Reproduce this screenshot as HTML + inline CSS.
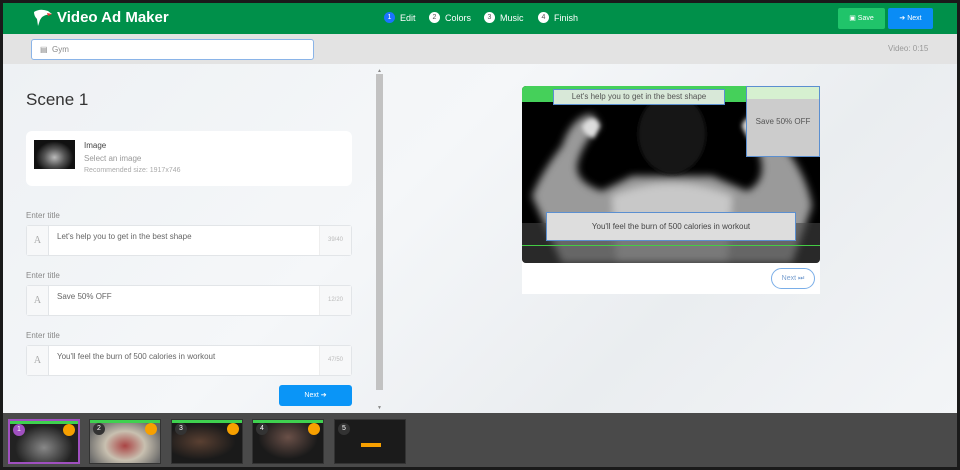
<!DOCTYPE html>
<html><head><meta charset="utf-8"><style>
*{box-sizing:border-box;margin:0;padding:0}
body{width:960px;height:470px;background:#1a1a1a;font-family:"Liberation Sans",sans-serif;position:relative;overflow:hidden}
.abs{position:absolute}
.hdr{left:3px;top:3px;width:954px;height:31px;background:#00904a}
.bar{left:3px;top:34px;width:954px;height:30px;background:#e3e3e3}
.main{left:3px;top:64px;width:954px;height:349px;background:linear-gradient(135deg,#eef1f4,#f5f7f9 40%,#eaedf0 70%,#f3f5f7)}
.bottom{left:3px;top:413px;width:954px;height:54px;background:#4a4a4a}
.step{color:#fff;font-size:9px;top:12px;display:flex;align-items:center}
.step i{display:inline-block;width:11px;height:11px;border-radius:50%;background:#fff;color:#555;font-style:normal;font-size:7px;text-align:center;line-height:11px;margin-right:5px}
.card{background:#fff;border-radius:6px}
.lbl{font-size:8px;color:#888}
.ta{left:26px;width:326px;height:31px;background:#fff;border:1px solid #e2e5e8;border-radius:3px}
.ta .a{position:absolute;left:0;top:0;width:22px;height:29px;border-right:1px solid #e2e5e8;background:#f7f8f9;font-family:"Liberation Serif",serif;font-size:10px;color:#aaa;text-align:center;line-height:29px}
.ta .t{position:absolute;left:30px;top:6px;font-size:8px;color:#666}
.ta .c{position:absolute;right:0;top:0;width:32px;height:29px;border-left:1px solid #eee;background:#f7f8f9;font-size:6px;color:#bbb;text-align:center;line-height:29px}
.th{top:419px;width:72px;height:45px;background:#111;border:1px solid #333}
.th .n{position:absolute;left:3px;top:3px;width:12px;height:12px;border-radius:50%;background:#333;color:#fff;font-size:7px;text-align:center;line-height:12px}
.th .o{position:absolute;right:3px;top:3px;width:12px;height:12px;border-radius:50%;background:#f7a000}
.th .g{position:absolute;left:0;top:0;width:100%;height:3px;background:#3fd14f}
</style></head><body>
<div class="abs hdr"></div>
<svg class="abs" style="left:32px;top:8px" width="22" height="20" viewBox="0 0 22 20"><path d="M2 4 Q8 0 16 3 L20 6 L14 7 Q10 8 8 12 L6 18 L5 11 Q2 8 2 4Z" fill="#fff"/><path d="M15 5 L20 6 L16 8Z" fill="#e33"/></svg>
<div class="abs" style="left:57px;top:9px;color:#fff;font-size:15px;font-weight:bold">Video Ad Maker</div>
<div class="abs step" style="left:384px"><i style="background:#1a73ff;color:#fff">1</i>Edit</div>
<div class="abs step" style="left:429px"><i>2</i>Colors</div>
<div class="abs step" style="left:484px"><i>3</i>Music</div>
<div class="abs step" style="left:538px"><i>4</i>Finish</div>
<div class="abs" style="left:838px;top:8px;width:47px;height:21px;background:#20c46a;border-radius:2px;color:#fff;font-size:7px;line-height:21px;text-align:center">▣ Save</div>
<div class="abs" style="left:888px;top:8px;width:45px;height:21px;background:#0a8cf5;border-radius:2px;color:#fff;font-size:7px;line-height:21px;text-align:center">➔ Next</div>
<div class="abs bar"></div>
<div class="abs" style="left:31px;top:39px;width:283px;height:21px;background:#fff;border:1px solid #8ab4e8;border-radius:3px;font-size:8px;color:#888;line-height:19px;padding-left:8px">▤ &nbsp;Gym</div>
<div class="abs" style="left:888px;top:44px;font-size:8px;color:#999">Video: 0:15</div>
<div class="abs main"></div>
<div class="abs" style="left:26px;top:90px;font-size:17px;color:#333">Scene 1</div>
<div class="abs card" style="left:26px;top:131px;width:326px;height:55px"></div>
<div class="abs" style="left:34px;top:140px;width:41px;height:29px;background:radial-gradient(ellipse at 50% 60%,#bbb 0,#555 35%,#111 65%)"></div>
<div class="abs" style="left:84px;top:141px;font-size:8px;color:#444">Image</div>
<div class="abs" style="left:84px;top:154px;font-size:8px;color:#999">Select an image</div>
<div class="abs" style="left:84px;top:167px;font-size:7px;color:#aaa">Recommended size: 1917x746</div>
<div class="abs lbl" style="left:26px;top:211px">Enter title</div>
<div class="abs ta" style="top:225px"><div class="a">A</div><div class="t">Let's help you to get in the best shape</div><div class="c">39/40</div></div>
<div class="abs lbl" style="left:26px;top:271px">Enter title</div>
<div class="abs ta" style="top:285px"><div class="a">A</div><div class="t">Save 50% OFF</div><div class="c">12/20</div></div>
<div class="abs lbl" style="left:26px;top:331px">Enter title</div>
<div class="abs ta" style="top:345px"><div class="a">A</div><div class="t">You'll feel the burn of 500 calories in workout</div><div class="c">47/50</div></div>
<div class="abs" style="left:279px;top:385px;width:73px;height:21px;background:#0a95f7;border-radius:3px;color:#fff;font-size:7px;text-align:center;line-height:21px">Next ➔</div>
<div class="abs" style="left:377px;top:68px;font-size:5px;color:#888">▲</div>
<div class="abs" style="left:376px;top:74px;width:7px;height:316px;background:#c2c2c2"></div>
<div class="abs" style="left:377px;top:405px;font-size:5px;color:#888">▼</div>
<!-- preview -->
<div class="abs" style="left:522px;top:86px;width:298px;height:208px;background:#fff"></div>
<div class="abs" style="left:522px;top:86px;width:298px;height:177px;background:#000;border-radius:4px;overflow:hidden">
 <svg class="abs" style="left:0;top:0" width="298" height="177" viewBox="0 0 298 177">
  <defs><filter id="b"><feGaussianBlur stdDeviation="4"/></filter><filter id="b2"><feGaussianBlur stdDeviation="2"/></filter></defs>
  <g filter="url(#b)">
   <path d="M40 177 L10 110 Q20 85 40 60 Q50 30 70 28 L78 40 Q62 55 56 75 Q50 95 80 105 L110 90 L190 90 L225 105 Q245 95 238 70 Q232 50 222 40 L230 28 Q250 30 262 60 Q285 90 290 120 L270 177Z" fill="#9a9a9a"/>
   <path d="M95 177 L90 110 Q150 85 210 110 L205 177Z" fill="#c8c8c8"/>
  </g>
  <g filter="url(#b2)">
   <ellipse cx="150" cy="48" rx="34" ry="40" fill="#151515"/>
   <path d="M60 40 Q72 25 78 40 L72 52 Q62 50 60 40Z" fill="#ddd"/>
   <path d="M238 40 Q226 25 220 40 L226 52 Q236 50 238 40Z" fill="#ddd"/>
  </g>
 </svg>
 <div class="abs" style="left:0;top:0;width:298px;height:16px;background:#45d05a"></div>
 <div class="abs" style="left:0;top:137px;width:298px;height:40px;background:#444;opacity:.6"></div>
 <div class="abs" style="left:0;top:159px;width:298px;height:1px;background:#4c4"></div>
</div>
<div class="abs" style="left:553px;top:89px;width:172px;height:16px;background:#d8e8d8;border:1px solid #5b8fd0;font-size:8px;color:#555;text-align:center;line-height:14px">Let's help you to get in the best shape</div>
<div class="abs" style="left:746px;top:86px;width:74px;height:71px;background:#ccc;border:1px solid #5b8fd0;font-size:8px;color:#555;text-align:center;line-height:70px">Save 50% OFF</div>
<div class="abs" style="left:747px;top:87px;width:72px;height:12px;background:#d6f0d0"></div>
<div class="abs" style="left:546px;top:212px;width:250px;height:29px;background:#ddd;border:1px solid #5b8fd0;font-size:8px;color:#444;text-align:center;line-height:27px">You'll feel the burn of 500 calories in workout</div>
<div class="abs" style="left:771px;top:268px;width:44px;height:21px;border:1px solid #7aaee8;border-radius:11px;background:#fff;font-size:7px;color:#7aa0d0;text-align:center;line-height:19px">Next ⏭</div>
<div class="abs bottom"></div>
<div class="abs th" style="left:8px;border:2px solid #a050c0;background:radial-gradient(ellipse at 50% 65%,#888,#222 60%)"><div class="g"></div><div class="n" style="background:#a050c0">1</div><div class="o"></div></div>
<div class="abs th" style="left:89px;background:radial-gradient(ellipse at 50% 60%,#a44,#c8c0b0 40%,#666 80%)"><div class="g"></div><div class="n">2</div><div class="o"></div></div>
<div class="abs th" style="left:171px;background:radial-gradient(ellipse at 40% 50%,#5a4032,#1a1a1a 60%)"><div class="g"></div><div class="n">3</div><div class="o"></div></div>
<div class="abs th" style="left:252px;background:radial-gradient(ellipse at 50% 40%,#6a5048,#1a1a1a 60%)"><div class="g"></div><div class="n">4</div><div class="o"></div></div>
<div class="abs th" style="left:334px;background:#1b1b1b"><div class="n">5</div><div class="abs" style="left:26px;top:23px;width:20px;height:4px;background:#f7a000"></div></div>
</body></html>
